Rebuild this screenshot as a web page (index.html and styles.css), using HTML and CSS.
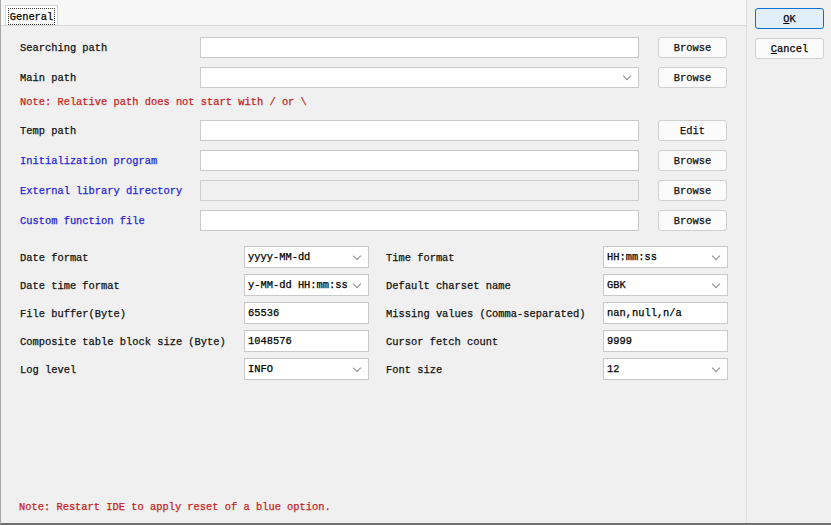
FILE: index.html
```html
<!DOCTYPE html>
<html>
<head>
<meta charset="utf-8">
<link rel="stylesheet" href="styles.css">
</head>
<body>
<div class="window">
  <div class="main">
    <div class="tabstrip">
      <div class="tab"><span class="focus">General</span></div>
    </div>
    <div class="panel">
      <div class="paths">
        <div class="lbl">Searching path</div>
        <div class="field"></div>
        <div class="btn">Browse</div>

        <div class="lbl">Main path</div>
        <div class="field combo"><span class="chev"></span></div>
        <div class="btn">Browse</div>

        <div class="note red">Note: Relative path does not start with / or \</div>

        <div class="lbl">Temp path</div>
        <div class="field"></div>
        <div class="btn">Edit</div>

        <div class="lbl blue">Initialization program</div>
        <div class="field"></div>
        <div class="btn">Browse</div>

        <div class="lbl blue">External library directory</div>
        <div class="field disabled"></div>
        <div class="btn">Browse</div>

        <div class="lbl blue">Custom function file</div>
        <div class="field"></div>
        <div class="btn">Browse</div>
      </div>

      <div class="opts">
        <div class="lbl">Date format</div>
        <div class="field combo"><span class="val">yyyy-MM-dd</span><span class="chev"></span></div>
        <div class="lbl">Time format</div>
        <div class="field combo"><span class="val">HH:mm:ss</span><span class="chev"></span></div>

        <div class="lbl">Date time format</div>
        <div class="field combo"><span class="val">y-MM-dd HH:mm:ss</span><span class="chev"></span></div>
        <div class="lbl">Default charset name</div>
        <div class="field combo"><span class="val">GBK</span><span class="chev"></span></div>

        <div class="lbl">File buffer(Byte)</div>
        <div class="field"><span class="val">65536</span></div>
        <div class="lbl">Missing values (Comma-separated)</div>
        <div class="field"><span class="val">nan,null,n/a</span></div>

        <div class="lbl">Composite table block size (Byte)</div>
        <div class="field"><span class="val">1048576</span></div>
        <div class="lbl">Cursor fetch count</div>
        <div class="field"><span class="val">9999</span></div>

        <div class="lbl">Log level</div>
        <div class="field combo"><span class="val">INFO</span><span class="chev"></span></div>
        <div class="lbl">Font size</div>
        <div class="field combo"><span class="val">12</span><span class="chev"></span></div>
      </div>

      <div class="spacer"></div>
      <div class="foot red">Note: Restart IDE to apply reset of a blue option.</div>
    </div>
  </div>
  <div class="side">
    <div class="dbtn primary"><u>O</u>K</div>
    <div class="dbtn"><u>C</u>ancel</div>
  </div>
</div>
</body>
</html>
```

FILE: styles.css
```css
html, body {
  margin: 0;
  padding: 0;
}
body {
  width: 831px;
  height: 525px;
  background: #f0f0f0;
  font-family: "Liberation Mono", "DejaVu Sans Mono", monospace;
  font-size: 10.4px;
  color: #111;
  -webkit-text-stroke: 0.25px;
  overflow: hidden;
}
.window {
  display: flex;
  height: 525px;
  border-bottom: 2px solid #6e6e6e;
  border-left: 1px solid #a8a8a8;
  box-sizing: border-box;
}
.main {
  width: 745px;
  display: flex;
  flex-direction: column;
  border-right: 1px solid #dcdcdc;
}
.tabstrip {
  height: 26px;
  background: #f7f7f7;
  box-sizing: border-box;
  padding: 5px 0 0 4px;
  border-bottom: 1px solid #dadada;
}
.tab {
  width: 53px;
  height: 20px;
  box-sizing: border-box;
  background: #ffffff;
  border: 1px solid #d4d4d4;
  border-bottom: none;
  padding: 2px;
}
.focus {
  display: flex;
  align-items: center;
  justify-content: center;
  height: 15px;
  border: 1px dotted #333;
  color: #000;
}
.panel {
  flex: 1;
  display: flex;
  flex-direction: column;
  padding: 11px 0 8px 19px;
  background: #f0f0f0;
}
.paths {
  display: grid;
  grid-template-columns: 180px 439px 88px;
  grid-template-rows: 21px 21px 14px 21px 21px 21px 21px;
  row-gap: 9px;
}
.paths .btn { margin-left: 19px; }
.lbl {
  display: flex;
  align-items: center;
  white-space: nowrap;
  padding-top: 1px;
}
.blue { color: #2424d6; }
.red { color: #c81e1e; }
.note {
  grid-column: 1 / 4;
  line-height: 12px;
  margin-top: -1px;
  white-space: nowrap;
}
.field {
  background: #ffffff;
  border: 1px solid #c9c9c9;
  box-sizing: border-box;
  display: flex;
  align-items: center;
  padding: 0 3px;
  color: #000;
  white-space: nowrap;
  overflow: hidden;
}
.field.disabled {
  background: #f0f0f0;
  border-color: #cfcfcf;
}
.combo .val { flex: 1; }
.chev {
  width: 5px;
  height: 5px;
  border-right: 1px solid #8a8a8a;
  border-bottom: 1px solid #8a8a8a;
  transform: rotate(45deg);
  margin: -3px 5px 0 auto;
  flex: none;
}
.btn {
  background: #fbfbfb;
  border: 1px solid #d0d0d0;
  border-radius: 3px;
  display: flex;
  align-items: center;
  justify-content: center;
  box-sizing: border-box;
  color: #111;
}
.opts {
  margin-top: 15px;
  display: grid;
  grid-template-columns: 224px 125px 234px 125px;
  row-gap: 6px;
  grid-auto-rows: 22px;
}
.opts .lbl:nth-child(4n+3) { padding-left: 17px; }
.spacer { flex: 1; }
.foot {
  margin-left: -1px;
  margin-bottom: 2px;
}
.side {
  flex: 1;
  display: flex;
  flex-direction: column;
  align-items: flex-start;
  padding: 8px 0 0 8px;
  gap: 9px;
}
.dbtn {
  width: 69px;
  height: 21px;
  box-sizing: border-box;
  border: 1px solid #d0d0d0;
  border-radius: 3px;
  background: #fbfbfb;
  display: flex;
  align-items: center;
  justify-content: center;
  color: #000;
}
.dbtn.primary {
  border: 1px solid #0a6fd0;
  background: #e1effb;
}
```
